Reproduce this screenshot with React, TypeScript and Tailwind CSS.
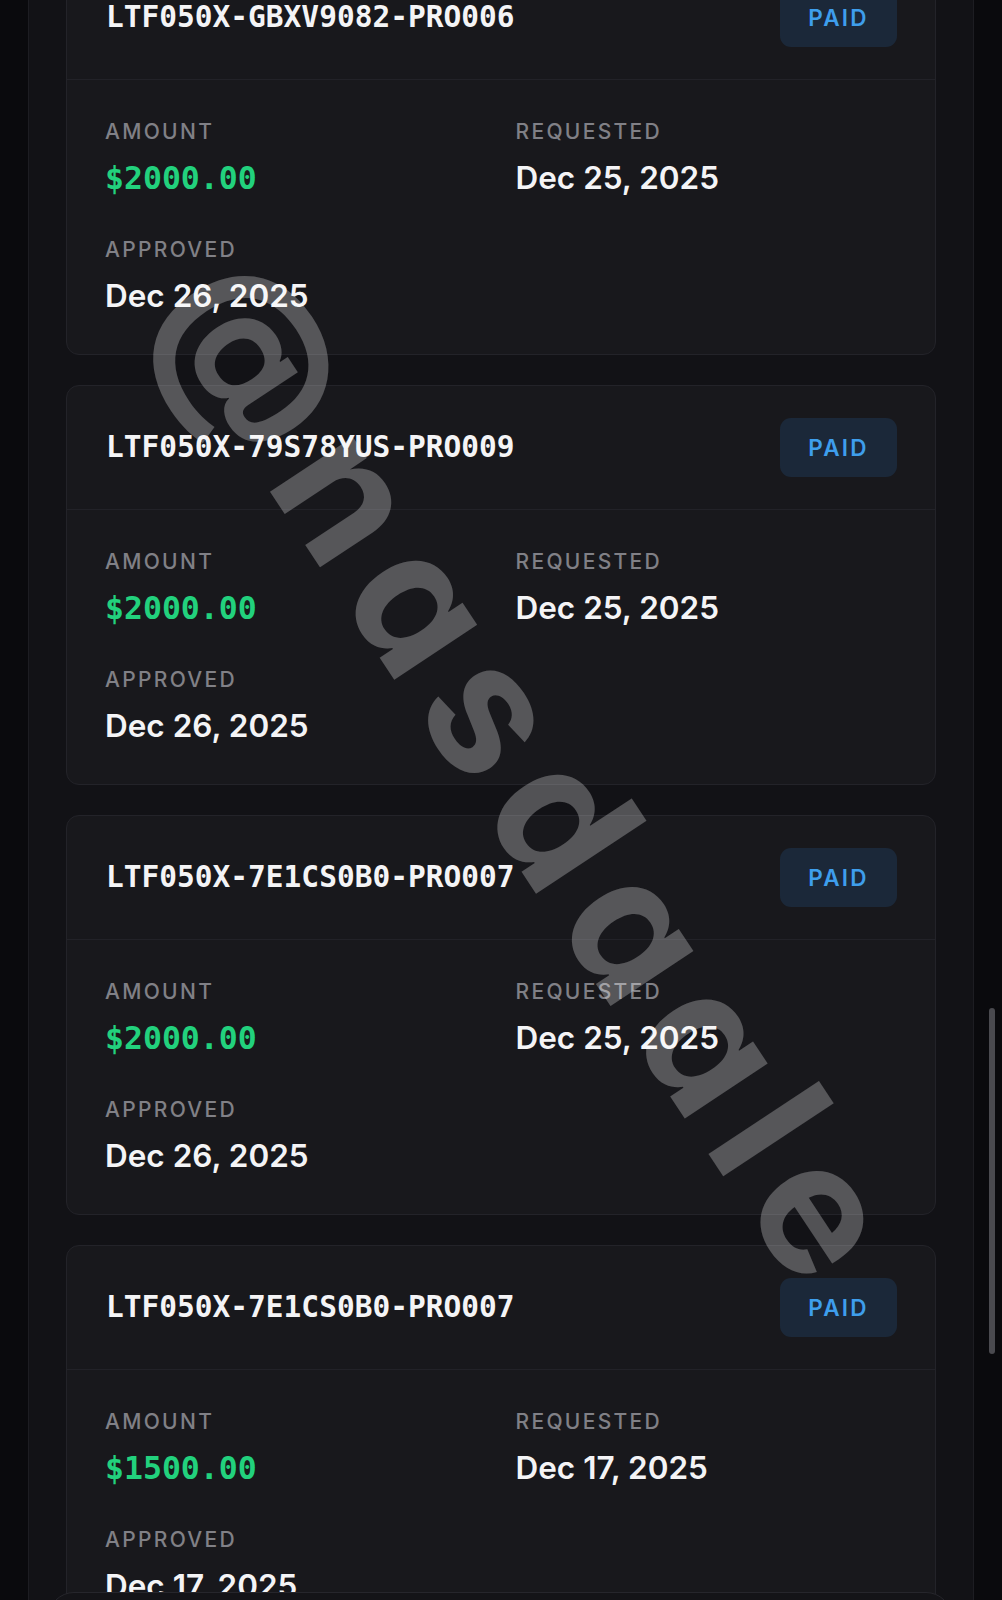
type Payout = {
  id: string;
  amount: string;
  requested: string;
  approved: string;
};

const PAYOUTS: Payout[] = [
  { id: 'LTF050X-GBXV9082-PRO006', amount: '$2000.00', requested: 'Dec 25, 2025', approved: 'Dec 26, 2025' },
  { id: 'LTF050X-79S78YUS-PRO009', amount: '$2000.00', requested: 'Dec 25, 2025', approved: 'Dec 26, 2025' },
  { id: 'LTF050X-7E1CS0B0-PRO007', amount: '$2000.00', requested: 'Dec 25, 2025', approved: 'Dec 26, 2025' },
  { id: 'LTF050X-7E1CS0B0-PRO007', amount: '$1500.00', requested: 'Dec 17, 2025', approved: 'Dec 17, 2025' },
];

const SANS = "font-['Inter','Liberation_Sans',sans-serif]";
const MONO = "font-['DejaVu_Sans_Mono','Liberation_Mono',monospace]";

export default function App() {
  return (
    <div className="relative h-[1600px] w-[1002px] overflow-hidden bg-[#0a0a0d]">
      {/* main panel */}
      <div className="ml-[28px] flex h-full w-[946px] flex-col border-x border-[#1d1d22] bg-[#121216] px-[37px]">
        <div className="-mt-[45px] flex flex-col gap-[30px]">
          {PAYOUTS.map((p, i) => (
            <PayoutCard key={i} payout={p} />
          ))}
        </div>
      </div>

      {/* watermark */}
      <div className="pointer-events-none absolute left-[536px] top-[774px]">
        <div
          className={`-translate-x-1/2 -translate-y-1/2 rotate-[56.5deg] whitespace-nowrap text-[182px] font-bold leading-none tracking-[0.11em] text-[rgba(255,255,255,0.27)] [font-feature-settings:'cv11'] ${SANS}`}
        >
          @nasdaale
        </div>
      </div>

      {/* scrollbar */}
      <div className="absolute left-[989px] top-[1008px] h-[346px] w-[6px] rounded-full bg-[#4a4a4f]" />

      {/* bottom sheet edge */}
      <div className="absolute left-[48px] top-[1592px] h-[30px] w-[904px] rounded-t-[26px] border border-[#26262c] bg-[#141418]" />
    </div>
  );
}

function PayoutCard({ payout }: { payout: Payout }) {
  return (
    <div className="h-[400px] shrink-0 rounded-[13px] border border-[#232329] bg-[#18181c]">
      <div className="flex items-center justify-between border-b border-[#222228] pl-[39px] pr-[38px] py-[32px]">
        <span className={`text-[29.5px] font-bold text-[#f4f4f6] ${MONO}`}>{payout.id}</span>
        <span
          className={`flex h-[59px] w-[117px] items-center justify-center rounded-[11px] bg-[#1b2839] text-[22.5px] font-semibold tracking-[0.1em] text-[#3e9eec] ${SANS}`}
        >
          PAID
        </span>
      </div>
      <div className="grid grid-cols-2 gap-x-[29px] gap-y-[40px] px-[38px] py-[39px]">
        <Field label="AMOUNT">
          <span className={`text-[31.5px] font-bold leading-[38px] text-[#22d17d] ${MONO}`}>{payout.amount}</span>
        </Field>
        <Field label="REQUESTED">
          <span className={`text-[31.5px] font-semibold leading-[38px] text-[#f4f4f6] ${SANS}`}>{payout.requested}</span>
        </Field>
        <Field label="APPROVED">
          <span className={`text-[31.5px] font-semibold leading-[38px] text-[#f4f4f6] ${SANS}`}>{payout.approved}</span>
        </Field>
      </div>
    </div>
  );
}

function Field({ label, children }: { label: string; children: React.ReactNode }) {
  return (
    <div className="flex flex-col gap-[14px]">
      <span className={`text-[21px] font-medium leading-[26px] tracking-[0.11em] text-[#808086] ${SANS}`}>{label}</span>
      {children}
    </div>
  );
}
